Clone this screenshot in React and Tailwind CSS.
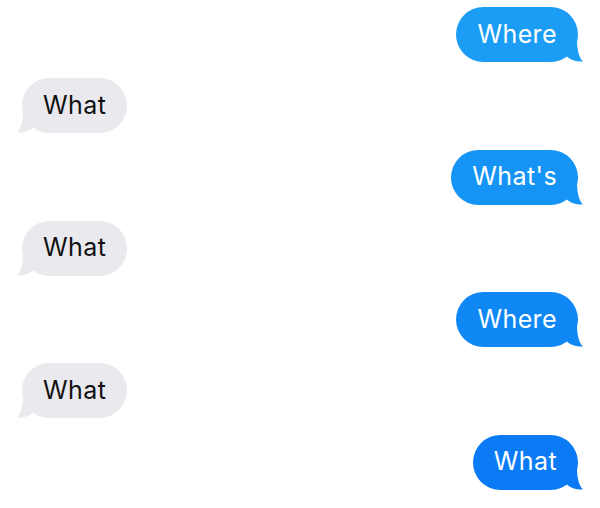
import React from "react";

function Tail({ color, side }) {
  const pos = side === "right" ? "right-[-6px] scale-x-100" : "left-[-6px] -scale-x-100";
  return (
    <svg
      width="24"
      height="24"
      viewBox="0 0 24 24"
      className={`absolute bottom-[-1px] ${pos}`}
    >
      <path
        d="M17 0 C17 10 18.5 18 23 22.5 C17 23 12 21.5 8 18.5 L3 13 L3 0 Z"
        fill={color}
      />
    </svg>
  );
}

function Bubble({ text, side, color }) {
  const isRight = side === "right";
  return (
    <div className={`flex ${isRight ? "justify-end" : "justify-start"}`}>
      <div
        className={`relative h-[55px] pl-[21px] pr-[21px] rounded-[28px] flex items-center text-[25px] leading-none tracking-[0.4px] ${
          isRight ? "text-white" : "text-[#111111]"
        }`}
        style={{ backgroundColor: color }}
      >
        <Tail color={color} side={side} />
        <span className="relative pb-[1px]">{text}</span>
      </div>
    </div>
  );
}

export default function App() {
  const gray = "#e9e9ee";
  const msgs = [
    { text: "Where", side: "right", color: "#1c9df5" },
    { text: "What", side: "left", color: gray },
    { text: "What's", side: "right", color: "#1594f5" },
    { text: "What", side: "left", color: gray },
    { text: "Where", side: "right", color: "#0f88f5" },
    { text: "What", side: "left", color: gray },
    { text: "What", side: "right", color: "#0a7bf5" },
  ];
  return (
    <div
      className="w-[600px] h-[508px] bg-white overflow-hidden flex flex-col gap-[16.3px] pt-[7px] pl-[22px] pr-[22px]"
      style={{ fontFamily: "Inter, 'Noto Sans', sans-serif" }}
    >
      {msgs.map((m, i) => (
        <Bubble key={i} {...m} />
      ))}
    </div>
  );
}
